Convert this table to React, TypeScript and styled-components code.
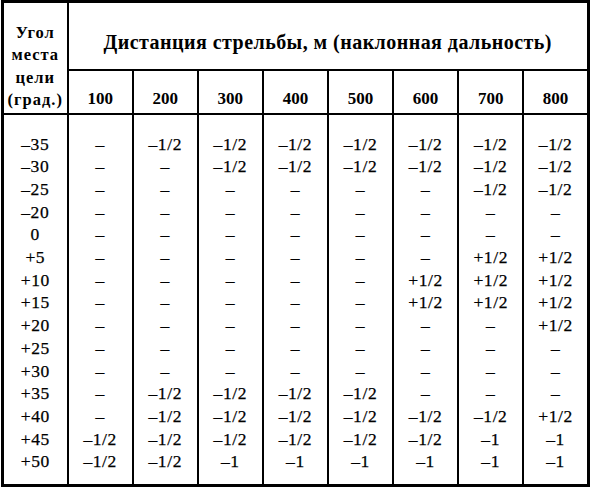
import React from "react";
import styled, { createGlobalStyle } from "styled-components";

const GlobalStyle = createGlobalStyle`
	html, body {
		margin: 0;
		padding: 0;
		background: #ffffff;
	}
	body {
		width: 591px;
		height: 489px;
		overflow: hidden;
		font-family: "Liberation Serif", "Times New Roman", serif;
		color: #000000;
	}
`;

const distances = ["100", "200", "300", "400", "500", "600", "700", "800"];

const D = "–";
const M = "–1/2";
const P = "+1/2";
const O = "–1";

const rows: { angle: string; values: string[] }[] = [
	{ angle: "–35", values: [D, M, M, M, M, M, M, M] },
	{ angle: "–30", values: [D, D, M, M, M, M, M, M] },
	{ angle: "–25", values: [D, D, D, D, D, D, M, M] },
	{ angle: "–20", values: [D, D, D, D, D, D, D, D] },
	{ angle: "0", values: [D, D, D, D, D, D, D, D] },
	{ angle: "+5", values: [D, D, D, D, D, D, P, P] },
	{ angle: "+10", values: [D, D, D, D, D, P, P, P] },
	{ angle: "+15", values: [D, D, D, D, D, P, P, P] },
	{ angle: "+20", values: [D, D, D, D, D, D, D, P] },
	{ angle: "+25", values: [D, D, D, D, D, D, D, D] },
	{ angle: "+30", values: [D, D, D, D, D, D, D, D] },
	{ angle: "+35", values: [D, M, M, M, M, D, D, D] },
	{ angle: "+40", values: [D, M, M, M, M, M, M, P] },
	{ angle: "+45", values: [M, M, M, M, M, M, O, O] },
	{ angle: "+50", values: [M, M, O, O, O, O, O, O] },
];

export default function App() {
	return (
		<>
			<GlobalStyle />
			<Page>
				<Table>
					<colgroup>
						{Array.from(Array(9).keys()).map((i) => (
							<Col key={i} />
						))}
					</colgroup>
					<thead>
						<HeaderRow $height={68}>
							<AngleHeader rowSpan={2}>
								Угол
								<br />
								места
								<br />
								цели
								<br />
								(град.)
							</AngleHeader>
							<TitleHeader colSpan={8}>
								Дистанция стрельбы, м (наклонная дальность)
							</TitleHeader>
						</HeaderRow>
						<HeaderRow $height={44}>
							{distances.map((d) => (
								<DistanceHeader key={d}>{d}</DistanceHeader>
							))}
						</HeaderRow>
					</thead>
					<tbody>
						{rows.map((row, index) => (
							<tr key={row.angle}>
								{[row.angle, ...row.values].map((v, i) => (
									<Cell
										key={i}
										$first={index === 0}
										$last={index === rows.length - 1}
									>
										{v}
									</Cell>
								))}
							</tr>
						))}
					</tbody>
				</Table>
			</Page>
		</>
	);
}

const Page = styled.div`
	padding: 0 0 0 1px;
`;

const Table = styled.table`
	width: 588px;
	table-layout: fixed;
	border-collapse: collapse;
	border: 3px solid #000;
	font-family: "Liberation Serif", "Times New Roman", serif;
`;

const Col = styled.col`
	width: 65.1px;
`;

const HeaderRow = styled.tr<{ $height: number }>`
	height: ${(p) => p.$height}px;
`;

const HeaderCell = styled.th`
	border: 2px solid #000;
	font-family: "Liberation Serif", "Times New Roman", serif;
	font-weight: 700;
	text-align: center;
	padding: 0;
	box-sizing: border-box;
`;

const AngleHeader = styled(HeaderCell)`
	font-size: 16.5px;
	line-height: 22.5px;
	letter-spacing: 1px;
	vertical-align: bottom;
	padding-bottom: 1px;
	white-space: nowrap;
`;

const TitleHeader = styled(HeaderCell)`
	font-size: 20px;
	line-height: 22px;
	padding-top: 12px;
	letter-spacing: 0.45px;
	white-space: nowrap;
`;

const DistanceHeader = styled(HeaderCell)`
	font-size: 17px;
	line-height: 20px;
	vertical-align: bottom;
	padding-bottom: 4px;
`;

const Cell = styled.td<{ $first?: boolean; $last?: boolean }>`
	border-left: 2px solid #000;
	border-right: 2px solid #000;
	text-align: center;
	font-family: "Liberation Serif", "Times New Roman", serif;
	font-size: 17.5px;
	line-height: 22.7px;
	letter-spacing: 0.6px;
	-webkit-text-stroke: 0.25px #000;
	padding: ${(p) => (p.$first ? "18px" : "0")} 0
		${(p) => (p.$last ? "11px" : "0")};
`;
